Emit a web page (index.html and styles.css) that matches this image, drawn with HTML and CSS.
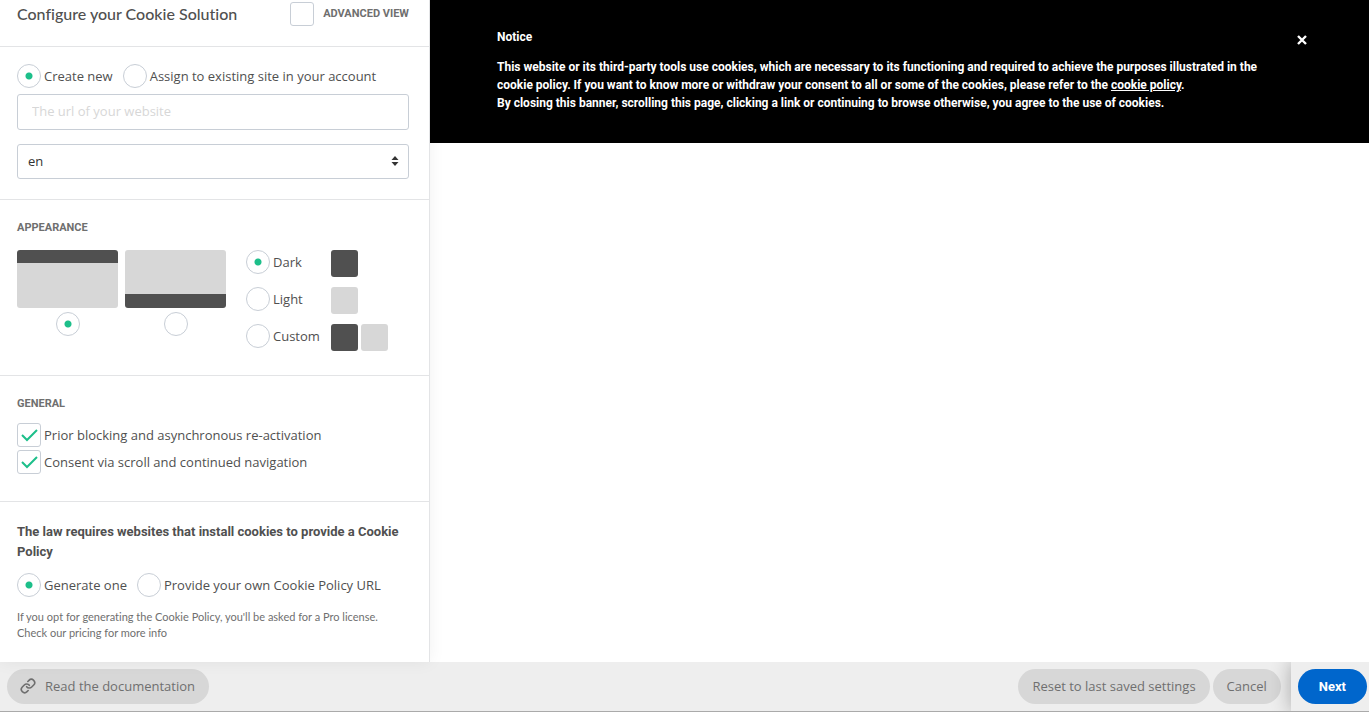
FILE: index.html
```
<!DOCTYPE html>
<html lang="en">
<head>
    <meta charset="UTF-8">
    <meta name="viewport" content="width=device-width, initial-scale=1.0">
    <title>Configure your Cookie Solution</title>
    <link rel="stylesheet" href="styles.css">
</head>
<body>
    <div class="main">
        <form class="sidebar" id="config-form">
            <div class="sidebar-header">
                <h1>Configure your Cookie Solution</h1>
                <label class="advanced"><input type="checkbox" class="box"> ADVANCED VIEW</label>
            </div>

            <div class="section site">
                <div class="options">
                    <label class="option"><input type="radio" name="site" class="radio" checked>Create new</label>
                    <label class="option"><input type="radio" name="site" class="radio">Assign to existing site in your account</label>
                </div>
                <input type="text" class="field url" placeholder="The url of your website" aria-label="The url of your website">
                <div class="select-wrap">
                    <select class="field lang" aria-label="Language">
                        <option>en</option>
                        <option>it</option>
                        <option>de</option>
                    </select>
                    <svg class="arrows" width="8" height="10" viewBox="0 0 8 10"><path d="M4 0L7.5 4H.5zM4 10L.5 6h7z" fill="#333"/></svg>
                </div>
            </div>

            <div class="section">
                <h2>APPEARANCE</h2>
                <div class="appearance">
                    <label class="position">
                        <span class="thumb thumb-top"></span>
                        <input type="radio" name="position" class="radio" aria-label="Top" checked>
                    </label>
                    <label class="position">
                        <span class="thumb thumb-bottom"></span>
                        <input type="radio" name="position" class="radio" aria-label="Bottom">
                    </label>
                    <div class="themes">
                        <div class="theme">
                            <label class="option"><input type="radio" name="theme" class="radio" checked>Dark</label>
                            <span class="swatch dark"></span>
                        </div>
                        <div class="theme">
                            <label class="option"><input type="radio" name="theme" class="radio">Light</label>
                            <span class="swatch light"></span>
                        </div>
                        <div class="theme">
                            <label class="option"><input type="radio" name="theme" class="radio">Custom</label>
                            <span class="swatch dark"></span>
                            <span class="swatch light"></span>
                        </div>
                    </div>
                </div>
            </div>

            <div class="section general">
                <h2>GENERAL</h2>
                <label class="option check">
                    <input type="checkbox" class="box" checked>
                    <svg class="tick" width="24" height="24" viewBox="0 0 24 24"><path d="M5 12l5 5L20 7" fill="none" stroke="#1dbf8a" stroke-width="2"/></svg>
                    Prior blocking and asynchronous re-activation
                </label>
                <label class="option check">
                    <input type="checkbox" class="box" checked>
                    <svg class="tick" width="24" height="24" viewBox="0 0 24 24"><path d="M5 12l5 5L20 7" fill="none" stroke="#1dbf8a" stroke-width="2"/></svg>
                    Consent via scroll and continued navigation
                </label>
            </div>

            <div class="section policy">
                <h3>The law requires websites that install cookies to provide a Cookie Policy</h3>
                <div class="options">
                    <label class="option"><input type="radio" name="policy" class="radio" checked>Generate one</label>
                    <label class="option"><input type="radio" name="policy" class="radio">Provide your own Cookie Policy URL</label>
                </div>
                <p class="hint">If you opt for generating the Cookie Policy, you'll be asked for a Pro license.<br>Check our pricing for more info</p>
            </div>
        </form>

        <div class="preview">
            <div class="banner">
                <div class="banner-text">
                    <p class="banner-title">Notice</p>
                    <p>This website or its third-party tools use cookies, which are necessary to its functioning and required to achieve the purposes illustrated in the cookie policy. If you want to know more or withdraw your consent to all or some of the cookies, please refer to the <a href="#">cookie policy</a>.<br>By closing this banner, scrolling this page, clicking a link or continuing to browse otherwise, you agree to the use of cookies.</p>
                </div>
                <button type="button" class="close" aria-label="Close">
                    <svg width="10" height="10" viewBox="0 0 10 10"><path d="M1 1l8 8M9 1L1 9" stroke="#fff" stroke-width="2.400"/></svg>
                </button>
            </div>
        </div>
    </div>

    <footer class="footer">
        <a href="#" class="btn docs">
            <svg width="16" height="16" viewBox="0 0 24 24" fill="none" stroke="#6f6f6f" stroke-width="2.400" stroke-linecap="round" stroke-linejoin="round"><path d="M10 13a5 5 0 0 0 7.540.540l3-3a5 5 0 0 0-7.070-7.070l-1.720 1.710"/><path d="M14 11a5 5 0 0 0-7.540-.540l-3 3a5 5 0 0 0 7.070 7.070l1.710-1.710"/></svg>
            Read the documentation
        </a>
        <div class="actions">
            <button type="reset" form="config-form" class="btn">Reset to last saved settings</button>
            <button type="button" class="btn">Cancel</button>
        </div>
        <div class="next-wrap">
            <button type="submit" form="config-form" class="btn next">Next</button>
        </div>
    </footer>
</body>
</html>
```
FILE: styles.css
```
* {
    box-sizing: border-box;
}
body {
    display: flex;
    flex-direction: column;
    min-height: 100vh;
    margin: 0;
    padding-bottom: 3px;
    background: #fff;
    font-family: "Open Sans", Arial, sans-serif;
    font-size: 13px;
    line-height: 20px;
    color: #505050;
}
h1, h2, h3, p {
    margin: 0;
}
.main {
    display: flex;
    flex: 1;
}

/* Sidebar */
.sidebar {
    position: relative;
    z-index: 1;
    flex: 0 0 430px;
    background: #fff;
    border-right: 1px solid #e3e4e6;
    box-shadow: 0 0 16px rgba(0, 0, 0, 0.06);
}
.sidebar-header {
    display: flex;
    justify-content: space-between;
    align-items: center;
    padding: 2px 20px 20px 17px;
}
h1 {
    font-family: Lato, Arial, sans-serif;
    font-size: 16px;
    font-weight: 500;
    font-variant-ligatures: none;
}
.advanced {
    display: flex;
    align-items: center;
    gap: 9px;
    font-family: Roboto, Arial, sans-serif;
    font-size: 11px;
    font-weight: 700;
    color: #6f6f6f;
}
.section {
    padding: 20px 20px 24px 17px;
    border-top: 1px solid #e3e4e6;
}
h2 {
    margin-bottom: 14px;
    font-family: Roboto, Arial, sans-serif;
    font-size: 11px;
    line-height: 16px;
    font-weight: 700;
    color: #6f6f6f;
}
.options {
    display: flex;
    gap: 10px;
}
.option {
    display: flex;
    align-items: center;
    gap: 3px;
}
.radio, .box {
    appearance: none;
    flex: none;
    width: 24px;
    height: 24px;
    margin: 0;
    border: 1px solid #c8ced6;
    background: #fff;
}
.radio {
    border-radius: 50%;
}
.radio:checked {
    background: radial-gradient(circle, #1dbf8a 3px, #fff 4px);
}
.box {
    border-radius: 3px;
}
.tick {
    display: none;
    position: absolute;
    left: 0;
    top: 0;
    pointer-events: none;
}
.box:checked + .tick {
    display: block;
}

/* Site */
.site {
    padding-top: 17px;
    padding-bottom: 20px;
}
.field {
    display: block;
    width: 100%;
    height: 36px;
    border: 1px solid #c8ced6;
    border-radius: 3px;
    background: #fff;
    font: inherit;
    color: #333;
}
.url {
    margin: 6px 0 14px;
    padding: 0 14px 2px;
}
.url::placeholder {
    color: #d7d7d7;
}
.select-wrap {
    position: relative;
}
.lang {
    appearance: none;
    height: 35px;
    padding: 0 10px 2px;
}
.arrows {
    position: absolute;
    right: 10px;
    top: 12px;
    pointer-events: none;
}

/* Appearance */
.appearance {
    display: flex;
    gap: 7px;
}
.position {
    display: flex;
    flex-direction: column;
    align-items: center;
    gap: 4px;
}
.thumb {
    width: 101px;
    height: 58px;
    border-radius: 3px;
    background: #d7d7d7;
}
.thumb-top {
    border-top: 13px solid #505050;
}
.thumb-bottom {
    border-bottom: 14px solid #505050;
}
.themes {
    display: flex;
    flex-direction: column;
    gap: 10px;
    margin-left: 13px;
}
.theme {
    display: flex;
    align-items: flex-start;
    gap: 3px;
}
.theme .option {
    width: 82px;
}
.swatch {
    width: 27px;
    height: 27px;
    border-radius: 3px;
}
.dark {
    background: #505050;
}
.light {
    background: #d7d7d7;
}

/* General */
.general {
    padding-bottom: 27px;
}
.general h2 {
    margin-bottom: 11px;
}
.check {
    position: relative;
}
.check + .check {
    margin-top: 3px;
}

/* Policy */
.policy {
    padding-bottom: 20px;
}
h3 {
    margin-bottom: 11px;
    font-family: Roboto, Arial, sans-serif;
    font-size: 13px;
    font-weight: 700;
}
.hint {
    margin-top: 12px;
    font-family: Lato, Arial, sans-serif;
    font-size: 11px;
    line-height: 16px;
    font-variant-ligatures: none;
    color: #6f6f6f;
}

/* Preview */
.preview {
    flex: 1;
}
.banner {
    display: flex;
    justify-content: space-between;
    align-items: flex-start;
    padding: 28px 62px 31px 67px;
    background: #000;
    color: #fff;
    font-family: Roboto, Arial, sans-serif;
    font-size: 12px;
    font-weight: 700;
    line-height: 18px;
}
.banner-text {
    max-width: 790px;
}
.banner-title {
    margin-bottom: 12px;
}
.banner a {
    color: #fff;
}
.close {
    display: flex;
    margin-top: 7px;
    padding: 0;
    border: 0;
    background: none;
    cursor: pointer;
}

/* Footer */
.footer {
    display: flex;
    align-items: center;
    background: #eee;
    border-bottom: 1px solid #aaa;
}
.btn {
    display: flex;
    align-items: center;
    height: 35px;
    padding: 0 14px 1px;
    border: 0;
    border-radius: 18px;
    background: #d7d7d7;
    font: inherit;
    color: #6f6f6f;
    text-decoration: none;
    cursor: pointer;
}
.docs {
    gap: 9px;
    margin-left: 7px;
    padding-left: 13px;
}
.actions {
    display: flex;
    gap: 3px;
    margin-left: auto;
    margin-right: 10px;
}
.next-wrap {
    padding: 7px 2px 7px 7px;
    background: #eee;
    box-shadow: 0 0 20px rgba(0, 0, 0, 0.3);
    clip-path: inset(0 0 0 -20px);
}
.next {
    padding: 0 21px;
    background: #06c;
    color: #fff;
    font-family: Roboto, Arial, sans-serif;
    font-weight: 700;
}
```
